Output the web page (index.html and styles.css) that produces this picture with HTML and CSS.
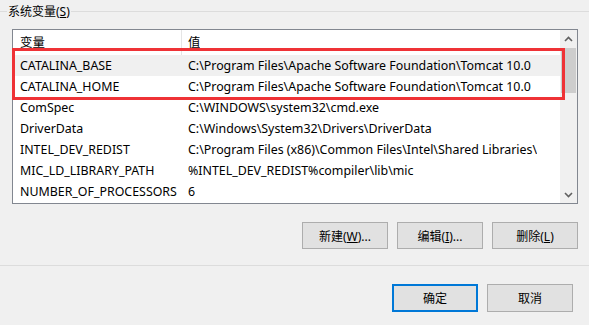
FILE: index.html
```html
<!DOCTYPE html>
<html lang="zh-CN">
<head>
  <meta charset="UTF-8" />
  <title>系统变量</title>
  <link rel="stylesheet" href="styles.css">
</head>
<body>
  <div class="group">
    <div class="group-title"><span>系统变量(<u>S</u>)</span></div>

    <div class="listbox">
      <div class="list">
        <div class="row head">
          <div class="c1">变量</div>
          <div class="c2">值</div>
        </div>
        <div class="row sel">
          <div class="c1">CATALINA_BASE</div>
          <div class="c2">C:\Program Files\Apache Software Foundation\Tomcat 10.0</div>
        </div>
        <div class="row">
          <div class="c1">CATALINA_HOME</div>
          <div class="c2">C:\Program Files\Apache Software Foundation\Tomcat 10.0</div>
        </div>
        <div class="row">
          <div class="c1">ComSpec</div>
          <div class="c2">C:\WINDOWS\system32\cmd.exe</div>
        </div>
        <div class="row">
          <div class="c1">DriverData</div>
          <div class="c2">C:\Windows\System32\Drivers\DriverData</div>
        </div>
        <div class="row">
          <div class="c1">INTEL_DEV_REDIST</div>
          <div class="c2">C:\Program Files (x86)\Common Files\Intel\Shared Libraries\</div>
        </div>
        <div class="row">
          <div class="c1">MIC_LD_LIBRARY_PATH</div>
          <div class="c2">%INTEL_DEV_REDIST%compiler\lib\mic</div>
        </div>
        <div class="row">
          <div class="c1">NUMBER_OF_PROCESSORS</div>
          <div class="c2">6</div>
        </div>
      </div>

      <div class="scrollbar">
        <div class="arrow">
          <svg width="9" height="6" viewBox="0 0 9 6"><path d="M1 5 L4.5 1.5 L8 5" /></svg>
        </div>
        <div class="track"><div class="thumb"></div></div>
        <div class="arrow">
          <svg width="9" height="6" viewBox="0 0 9 6"><path d="M1 1 L4.5 4.5 L8 1" /></svg>
        </div>
      </div>

      <!-- marca roja sobre las dos filas de Tomcat -->
      <div class="mark"></div>
    </div>

    <div class="actions">
      <button type="button">新建(<u>W</u>)...</button>
      <button type="button">编辑(<u>I</u>)...</button>
      <button type="button">删除(<u>L</u>)</button>
    </div>
  </div>

  <div class="footer">
    <button type="button" class="btn-default">确定</button>
    <button type="button">取消</button>
  </div>
</body>
</html>
```

FILE: styles.css
```css
body {
  margin: 0;
  background: #f0f0f0;
  font-family: "Noto Sans", "Noto Sans CJK SC", sans-serif;
  font-size: 12.4px;
  color: #000;
}
.group {
  margin-top: 11px;
  border-top: 1px solid #dcdcdc;
  border-bottom: 1px solid #dcdcdc;
  padding-bottom: 16px;
}
.group-title {
  height: 16px;
  margin-top: -8px;
  padding-left: 7px;
  line-height: 16px;
  font-size: 12px;
}
.group-title span {
  background: #f0f0f0;
  padding: 0 1px;
}
.listbox {
  position: relative;
  display: flex;
  box-sizing: border-box;
  width: 566px;
  height: 175px;
  margin: 9px 0 0 12px;
  border: 1px solid #828790;
  background: #fff;
}
.list {
  flex: 1;
  overflow: hidden;
}
.row {
  display: flex;
  height: 21px;
  line-height: 21px;
  white-space: nowrap;
}
.row.head {
  height: 25px;
  line-height: 25px;
}
.row.sel {
  background: #f0f0f0;
}
.c1 {
  box-sizing: border-box;
  width: 169px;
  flex: none;
  padding-left: 7px;
  overflow: hidden;
}
.c2 {
  padding-left: 6px;
  overflow: hidden;
}
.head .c1 {
  border-right: 1px solid #e5e5e5;
}
.scrollbar {
  display: flex;
  flex-direction: column;
  width: 17px;
  background: #f0f0f0;
}
.arrow {
  display: flex;
  align-items: center;
  justify-content: center;
  height: 17px;
}
.arrow svg path {
  fill: none;
  stroke: #606060;
  stroke-width: 1.6;
}
.track {
  flex: 1;
  padding: 1px 1px 0;
}
.thumb {
  height: 45px;
  background: #cdcdcd;
}
.mark {
  position: absolute;
  left: -1px;
  top: 18px;
  box-sizing: border-box;
  width: 553px;
  height: 52px;
  border: 3px solid #ef3236;
}
.actions, .footer {
  display: flex;
  justify-content: flex-end;
  gap: 9px;
}
.actions {
  margin-top: 18px;
  padding-right: 11px;
}
.footer {
  margin-top: 18px;
  padding-right: 16px;
}
button {
  box-sizing: border-box;
  width: 86px;
  height: 27px;
  padding: 0;
  background: #e1e1e1;
  border: 1px solid #adadad;
  border-radius: 0;
  font: inherit;
  font-size: 12px;
  color: #000;
}
.footer button {
  height: 28px;
}
.btn-default {
  border: 2px solid #0078d7;
}
```
